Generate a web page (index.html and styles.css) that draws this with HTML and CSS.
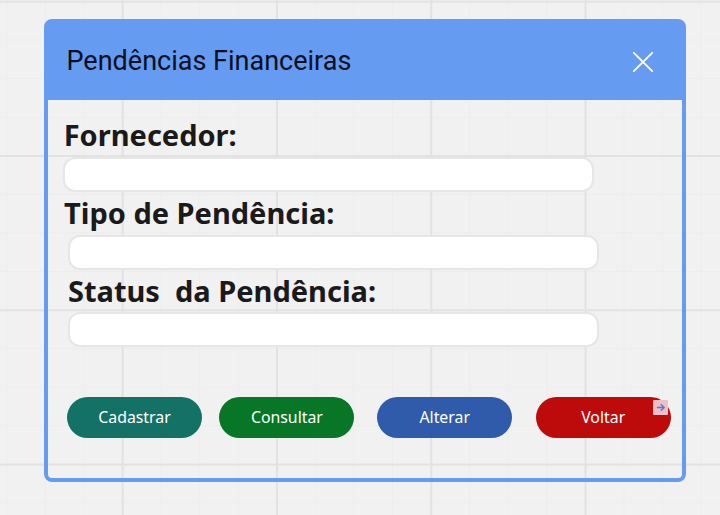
FILE: index.html
```html
<!DOCTYPE html>
<html lang="pt-BR">
<head>
<meta charset="utf-8">
<title>Pendências Financeiras</title>
<link rel="stylesheet" href="styles.css">
</head>
<body>
<main class="dialog">
  <header class="dialog-header">
    <h1 class="title">Pendências Financeiras</h1>
    <svg class="close" viewBox="0 0 22 22" width="22" height="22"><path d="M1.8 1.8 20.2 20.2M20.2 1.8 1.8 20.2"/></svg>
  </header>
  <form class="dialog-body">
    <label class="label label-first" for="fornecedor">Fornecedor:</label>
    <input class="field field-first" id="fornecedor" type="text">
    <label class="label label-second" for="tipo">Tipo de Pendência:</label>
    <input class="field field-second" id="tipo" type="text">
    <label class="label label-third" for="status">Status&nbsp; da Pendência:</label>
    <input class="field" id="status" type="text">
    <div class="actions">
      <button class="btn btn-teal" type="button">Cadastrar</button>
      <button class="btn btn-green" type="button">Consultar</button>
      <button class="btn btn-blue" type="button">Alterar</button>
      <button class="btn btn-red" type="button">Voltar
        <svg class="link-badge" viewBox="0 0 15 15" width="15" height="15"><rect width="15" height="15" rx="1"/><path d="M4 7.5h7M7.8 4.2l3.3 3.3-3.3 3.3"/></svg>
      </button>
    </div>
  </form>
</main>
</body>
</html>
```
FILE: styles.css
```css
* { box-sizing: border-box; }

body {
  margin: 0;
  height: 515px;
  padding: 19px 34px 0 43.5px;
  overflow: hidden;
  background-color: #f1f1f1;
  background-image:
    linear-gradient(to right, #e2e2e2 1.5px, transparent 1.5px),
    linear-gradient(to bottom, #e2e2e2 1.5px, transparent 1.5px),
    linear-gradient(to right, #ededed 1px, transparent 1px),
    linear-gradient(to bottom, #ededed 1px, transparent 1px);
  background-size: 154.3px 154.3px, 154.3px 154.3px, 38.575px 38.575px, 38.575px 38.575px;
  background-position: 121.7px 0, 0 0.7px, 6.4px 0, 0 1px;
}

.dialog {
  height: 463px;
  border: 4px solid #659bf1;
  border-radius: 8px;
}

.dialog-header {
  display: flex;
  align-items: flex-start;
  justify-content: space-between;
  height: 77px;
  padding: 20px 28px 0 19px;
  background: #659bf1;
}

.title {
  margin: 0;
  font: 400 27px/36px Roboto, sans-serif;
  color: #071022;
}

.close {
  margin-top: 7.5px;
  fill: none;
  stroke: #fff;
  stroke-width: 1.9;
  stroke-linecap: round;
}

.dialog-body {
  display: flex;
  flex-direction: column;
  align-items: flex-start;
  padding: 13px 0 0 20px;
}

.label {
  font: 700 29px/41px "Noto Sans", sans-serif;
  color: #1a1a1a;
  white-space: nowrap;
}

.label-first { line-height: 44px; margin-left: -3.8px; }
.label-second { margin: 0 0 2px -3.5px; }
.label-third { margin: 0 0 1px 0.5px; }

.field {
  width: 531px;
  height: 35px;
  padding: 0 12px;
  border: 2px solid #e6e6e6;
  border-radius: 12px;
  background: #fff;
  font: 16px "Noto Sans", sans-serif;
}

.field-first { margin-left: -4.5px; }

.actions {
  display: flex;
  width: 604px;
  margin: 50px 0 0 -0.5px;
}

.btn {
  position: relative;
  width: 135px;
  height: 41px;
  padding: 0 0 1px;
  border: 0;
  border-radius: 20.5px;
  color: #fff;
  font: 400 15.85px/38px "Noto Sans", sans-serif;
}

.btn-teal { background: #147165; }
.btn-green { margin-left: 17.4px; background: #077627; }
.btn-blue { margin-left: 22.8px; background: #305bab; }
.btn-red { margin-left: 23.5px; background: #bd0b0b; }

.link-badge {
  position: absolute;
  top: 3px;
  right: 3px;
}

.link-badge rect { fill: #eebfc5; }

.link-badge path {
  fill: none;
  stroke: #5379dd;
  stroke-width: 1.4;
}
```
